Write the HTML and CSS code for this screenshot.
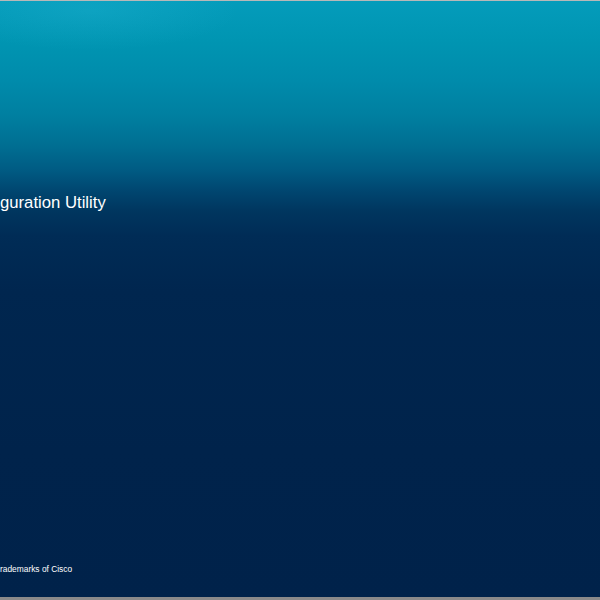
FILE: index.html
```html
<!DOCTYPE html>
<html>
<head>
<meta charset="utf-8">
<link rel="stylesheet" href="styles.css">
</head>
<body>
<div class="page">
  <div class="glow"></div>
  <h1 class="title">guration Utility</h1>
  <div class="spacer"></div>
  <p class="footer">rademarks of Cisco</p>
</div>
</body>
</html>
```
FILE: styles.css
```css
html, body {
  margin: 0;
  padding: 0;
  width: 600px;
  height: 600px;
  overflow: hidden;
  background: #00224a;
}
.page {
  position: relative;
  box-sizing: border-box;
  width: 600px;
  height: 600px;
  border-top: 1px solid #b8b8b8;
  border-bottom: 3px solid #8a8a8a;
  display: flex;
  flex-direction: column;
  font-family: "Liberation Sans", Arial, sans-serif;
  color: #ffffff;
  background:
    linear-gradient(180deg,
      #049cbb 0px,
      #0095b2 40px,
      #008bab 80px,
      #007fa0 115px,
      #006e92 145px,
      #005c84 168px,
      #004670 190px,
      #00365f 210px,
      #002c56 235px,
      #00264f 290px,
      #00234b 450px,
      #00224a 600px);
  overflow: hidden;
}
.glow {
  position: absolute;
  left: -60px;
  top: -30px;
  width: 300px;
  height: 80px;
  background: radial-gradient(ellipse at center, rgba(60, 200, 230, 0.18), rgba(60, 200, 230, 0) 70%);
  pointer-events: none;
}
.title {
  position: relative;
  margin: 192px 0 0 0;
  font-size: 16.7px;
  font-weight: normal;
  line-height: 20px;
  white-space: nowrap;
}
.spacer {
  flex: 1;
}
.footer {
  position: relative;
  margin: 0 0 22px 0;
  font-size: 8.4px;
  line-height: 11px;
  white-space: nowrap;
}
```
